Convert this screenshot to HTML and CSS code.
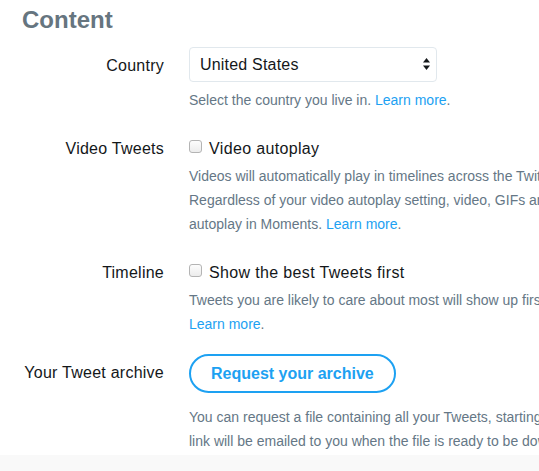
FILE: index.html
```html
<!DOCTYPE html>
<html lang="en">
<head>
  <meta charset="UTF-8" />
  <title>Content settings</title>
  <link rel="stylesheet" href="styles.css">
</head>
<body>

<div class="page">
  <h2 class="section-title">Content</h2>

  <form class="settings">
    <div class="row">
      <label class="row-label country-label" for="country">Country</label>
      <div class="row-control">
        <div class="select-wrap">
          <select id="country" class="select">
            <option>United States</option>
            <option>Canada</option>
            <option>United Kingdom</option>
          </select>
          <svg class="select-arrows" width="7" height="12" viewBox="0 0 7 12">
            <path d="M3.5 0 L7 4.5 L0 4.5 Z" fill="#14171a" />
            <path d="M0 7.5 L7 7.5 L3.5 12 Z" fill="#14171a" />
          </svg>
        </div>
        <p class="help">Select the country you live in. <a href="#">Learn more</a>.</p>
      </div>
    </div>

    <div class="row">
      <div class="row-label">Video Tweets</div>
      <div class="row-control">
        <label class="check">
          <input type="checkbox" />
          <span>Video autoplay</span>
        </label>
        <p class="help">
          Videos will automatically play in timelines across the Twitter website.<br>
          Regardless of your video autoplay setting, video, GIFs and Vines will always<br>
          autoplay in Moments. <a href="#">Learn more</a>.
        </p>
      </div>
    </div>

    <div class="row row-tight">
      <div class="row-label">Timeline</div>
      <div class="row-control">
        <label class="check">
          <input type="checkbox" />
          <span>Show the best Tweets first</span>
        </label>
        <p class="help">
          Tweets you are likely to care about most will show up first in your timeline.<br>
          <a href="#">Learn more</a>.
        </p>
      </div>
    </div>

    <div class="row">
      <div class="row-label archive-label">Your Tweet archive</div>
      <div class="row-control">
        <button type="button" class="btn-outline">Request your archive</button>
        <p class="help help-archive">
          You can request a file containing all your Tweets, starting with your first. A<br>
          link will be emailed to you when the file is ready to be downloaded.
        </p>
      </div>
    </div>
  </form>
</div>

<div class="footer-band"></div>

</body>
</html>
```

FILE: styles.css
```css
html, body {
  overflow: hidden;
}
body {
  margin: 0;
  background: #fff;
  font-family: "Liberation Sans", Arial, sans-serif;
  color: #14171a;
}
.page {
  padding: 6px 0 2px 22px;
  width: 900px;
}
.section-title {
  margin: 0;
  font-size: 24px;
  line-height: 28px;
  font-weight: bold;
  color: #66757f;
}
.settings {
  margin-top: 13px;
}
.row {
  display: grid;
  grid-template-columns: 142px 1fr;
  column-gap: 25px;
  margin-bottom: 25px;
}
.row:last-child {
  margin-bottom: 0;
}
.row-tight {
  margin-bottom: 18px;
}
.row-label {
  text-align: right;
  font-size: 16px;
  line-height: 24px;
  letter-spacing: 0.25px;
}
.country-label {
  padding-top: 7px;
}
.archive-label {
  padding-top: 7px;
}
.row-control {
  white-space: nowrap;
}
.select-wrap {
  position: relative;
  width: 248px;
}
.select {
  appearance: none;
  -webkit-appearance: none;
  display: block;
  width: 100%;
  height: 35px;
  padding: 0 30px 0 10px;
  border: 1px solid #e1e8ed;
  border-radius: 4px;
  background: #fff;
  font-family: inherit;
  font-size: 16px;
  letter-spacing: 0.2px;
  color: #14171a;
}
.select-arrows {
  position: absolute;
  right: 7px;
  top: 11px;
}
.help {
  margin: 3px 0 0;
  font-size: 14px;
  line-height: 24px;
  color: #657786;
}
.select-wrap + .help {
  margin-top: 6px;
}
.help a {
  color: #1da1f2;
  text-decoration: none;
}
.help-archive {
  margin-top: 12px;
}
.check {
  display: flex;
  align-items: flex-start;
  gap: 7px;
  font-size: 16px;
  line-height: 24px;
  letter-spacing: 0.35px;
}
.check input {
  appearance: none;
  -webkit-appearance: none;
  width: 13px;
  height: 13px;
  margin: 3px 0 0;
  border: 1px solid #b4b4b4;
  border-radius: 3px;
  background: linear-gradient(#fdfdfd, #ececec);
}
.btn-outline {
  display: block;
  height: 39px;
  padding: 0 20px;
  border: 2px solid #1da1f2;
  border-radius: 20px;
  background: #fff;
  color: #1da1f2;
  font-family: inherit;
  font-size: 16px;
  font-weight: bold;
}
.footer-band {
  height: 40px;
  background: #f9f9f9;
}
```
